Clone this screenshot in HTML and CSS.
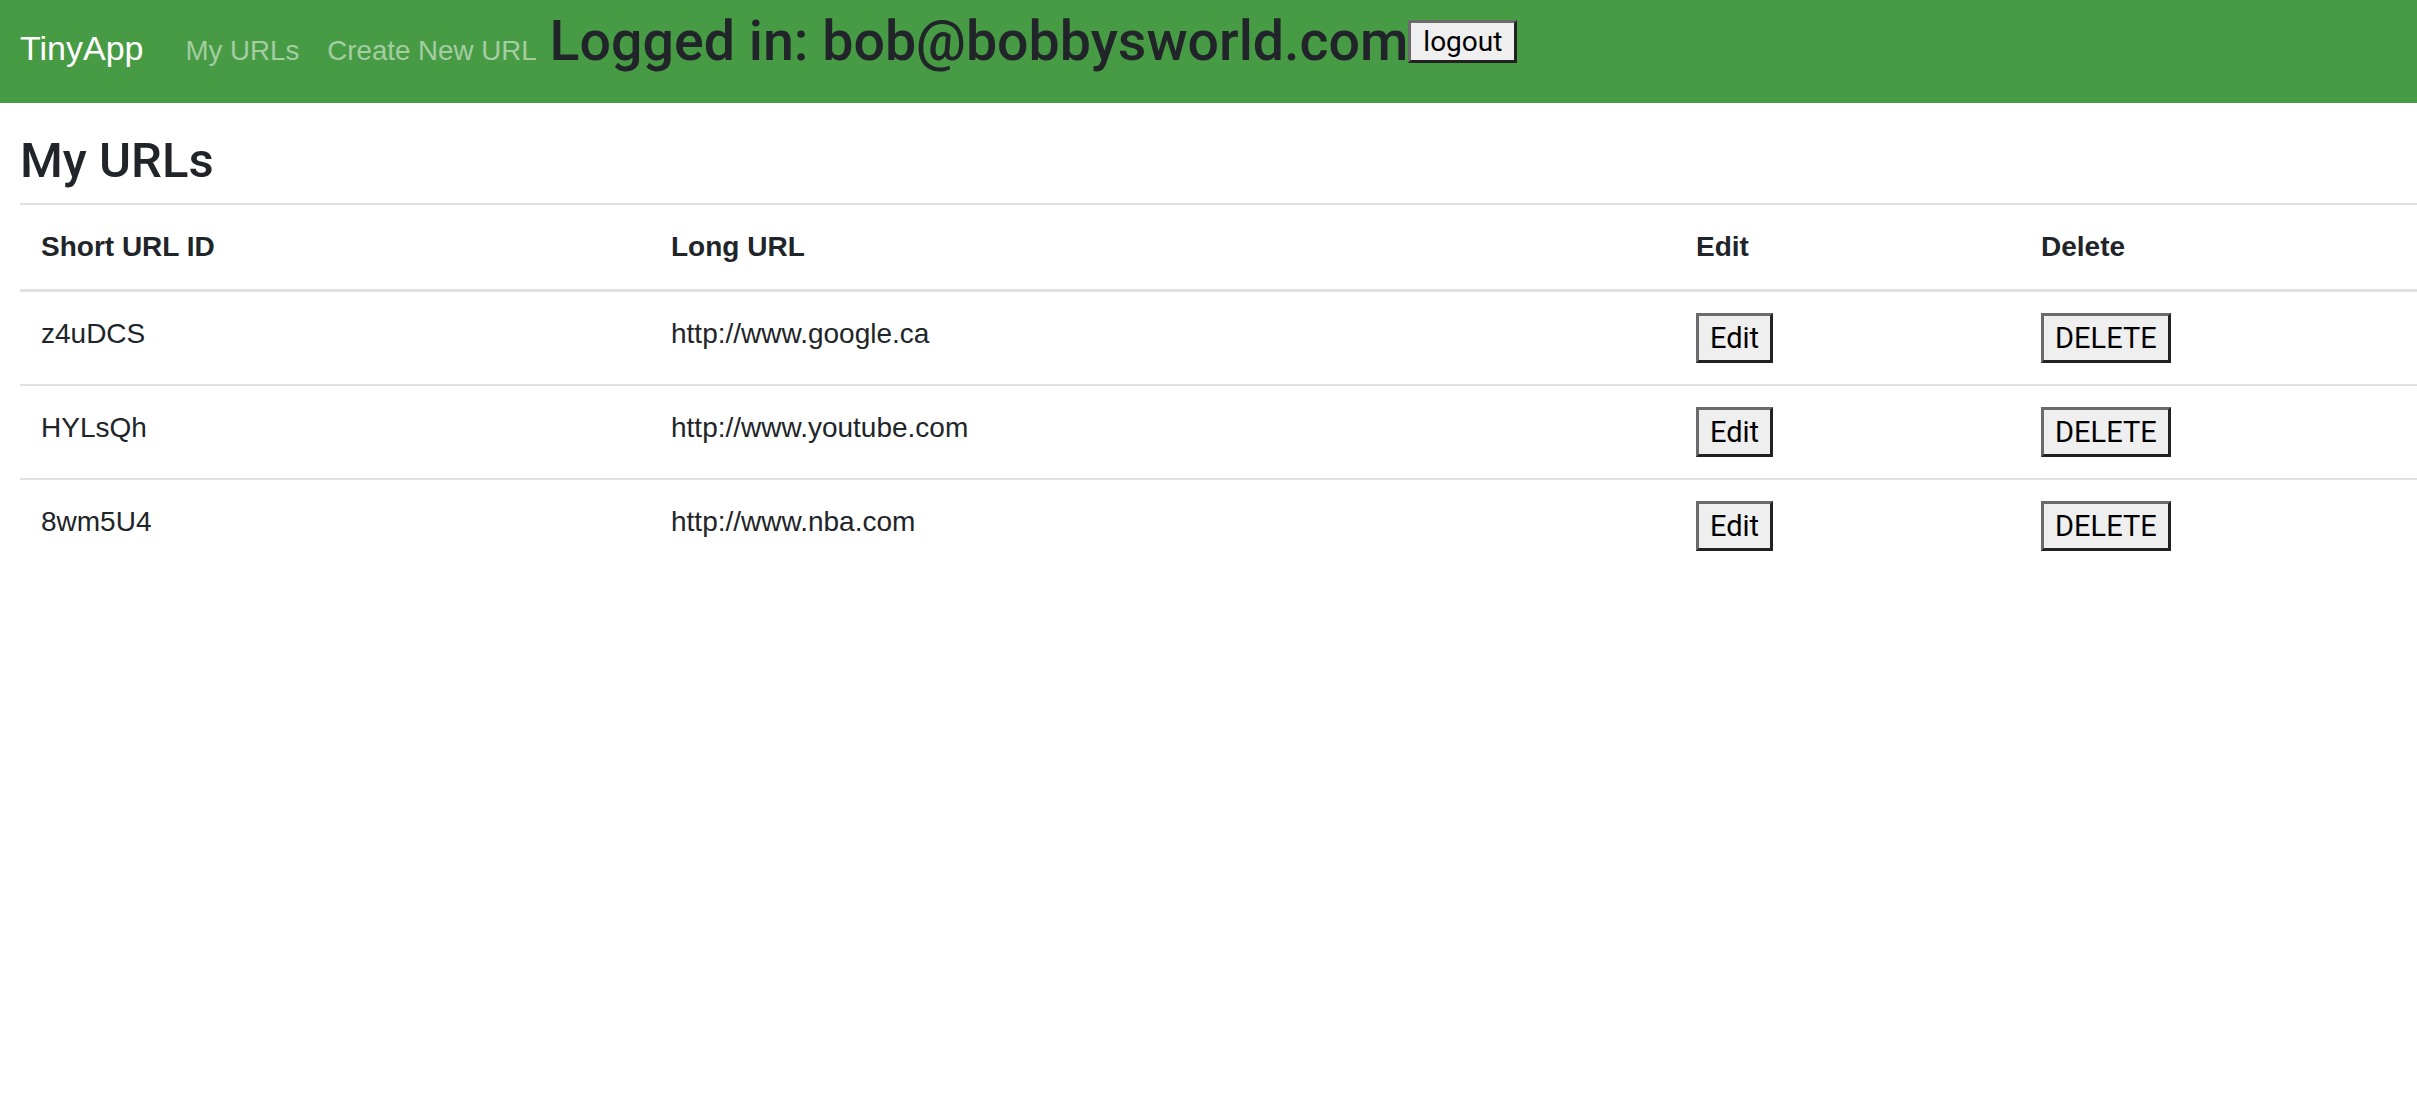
FILE: index.html
```html
<!DOCTYPE html>
<html lang="en">
<head>
<meta charset="utf-8">
<title>TinyApp</title>
<link rel="stylesheet" href="styles.css">
</head>
<body>
<nav class="navbar">
  <a class="brand" href="#">TinyApp</a>
  <a class="nav-link" href="#">My URLs</a>
  <a class="nav-link" href="#">Create New URL</a>
  <h2 class="login">Logged in: bob@bobbysworld.com</h2>
  <form class="logout-form"><button class="logout" type="button">logout</button></form>
</nav>
<main class="content">
  <h3 class="page-title">My URLs</h3>
  <table class="url-table">
    <thead>
      <tr>
        <th class="col-id">Short URL ID</th>
        <th class="col-long">Long URL</th>
        <th class="col-edit">Edit</th>
        <th class="col-del">Delete</th>
      </tr>
    </thead>
    <tbody>
      <tr>
        <td>z4uDCS</td>
        <td>http://www.google.ca</td>
        <td><button class="btn" type="button">Edit</button></td>
        <td><button class="btn" type="button">DELETE</button></td>
      </tr>
      <tr>
        <td>HYLsQh</td>
        <td>http://www.youtube.com</td>
        <td><button class="btn" type="button">Edit</button></td>
        <td><button class="btn" type="button">DELETE</button></td>
      </tr>
      <tr>
        <td>8wm5U4</td>
        <td>http://www.nba.com</td>
        <td><button class="btn" type="button">Edit</button></td>
        <td><button class="btn" type="button">DELETE</button></td>
      </tr>
    </tbody>
  </table>
</main>
</body>
</html>
```

FILE: styles.css
```css
* { box-sizing: border-box; }

html, body {
  margin: 0;
  padding: 0;
  background: #ffffff;
}

body {
  font-family: "Liberation Sans", Arial, sans-serif;
  font-size: 28px;
  line-height: 1.5;
  color: #212529;
  overflow-x: hidden;
}

.navbar {
  display: flex;
  align-items: baseline;
  height: 103px;
  padding: 9px 20px 0 20px;
  background: #489b45;
}

.brand {
  font-size: 34px;
  line-height: 1.5;
  color: #ffffff;
  text-decoration: none;
  margin-right: 28px;
}

.nav-link {
  display: block;
  padding: 14px 14px;
  font-size: 27.7px;
  line-height: 1.5;
  color: #a4cda2;
  text-decoration: none;
}

.login {
  margin: 0 0 0 -1px;
  font-family: Roboto, "Liberation Sans", sans-serif;
  font-weight: 500;
  font-size: 55.5px;
  line-height: 1.2;
  color: #212529;
  white-space: nowrap;
}

.logout-form {
  margin: 0;
  align-self: flex-start;
  margin-top: 11px;
}

.logout {
  font-family: Roboto, "Liberation Sans", sans-serif;
  font-size: 28px;
  line-height: normal;
  color: #000000;
  background: #efefef;
  padding: 2px 12px;
  border: 3px solid;
  border-color: #6b6b6b #222222 #222222 #6b6b6b;
  border-radius: 0;
  margin: 0;
}

.content {
  padding: 29px 0 0 20px;
}

.page-title {
  margin: 0 0 12px 0;
  font-family: Roboto, "Liberation Sans", sans-serif;
  font-weight: 500;
  font-size: 49px;
  line-height: 1.2;
  color: #212529;
}

.url-table {
  width: 100%;
  border-collapse: collapse;
  table-layout: fixed;
}

.url-table th,
.url-table td {
  padding: 21px;
  text-align: left;
  vertical-align: top;
  border-top: 2px solid #dee2e6;
}

.url-table th {
  font-weight: bold;
}

.url-table thead th {
  border-bottom: 3px solid #dee2e6;
}

.col-id { width: 630px; }
.col-long { width: 1025px; }
.col-edit { width: 345px; }
.col-del { width: auto; }

.btn {
  display: block;
  font-family: Roboto, "Liberation Sans", sans-serif;
  font-size: 29px;
  line-height: 42px;
  color: #000000;
  background: #efefef;
  padding: 1px 11px;
  border: 3px solid;
  border-color: #6b6b6b #222222 #222222 #6b6b6b;
  border-radius: 0;
  margin: 0;
}
```
